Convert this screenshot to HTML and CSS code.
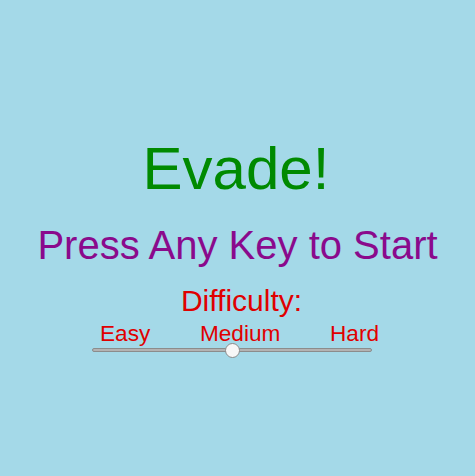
FILE: index.html
```html
<!DOCTYPE html>
<html>
<head>
<meta charset="utf-8">
<link rel="stylesheet" href="styles.css">
</head>
<body>
<div class="screen">
  <h1 class="title">Evade!</h1>
  <div class="prompt">Press Any Key to Start</div>
  <div class="difficulty">Difficulty:</div>
  <div class="levels">
    <span class="level">Easy</span>
    <span class="level">Medium</span>
    <span class="level">Hard</span>
  </div>
  <div class="slider-row">
    <input class="slider" type="range" min="0" max="2" value="1" step="1">
  </div>
</div>
</body>
</html>
```
FILE: styles.css
```css
html, body {
  margin: 0;
  padding: 0;
  height: 100%;
}
body {
  background: #a4d9e8;
  font-family: "Liberation Sans", Arial, sans-serif;
}
.screen {
  display: flex;
  flex-direction: column;
  align-items: center;
  padding-top: 139px;
}
.title {
  margin: 0 3px 0 0;
  font-size: 60px;
  line-height: 60px;
  font-weight: normal;
  color: #008a00;
}
.prompt {
  margin-top: 26px;
  font-size: 40px;
  line-height: 40px;
  color: #8a0a8c;
}
.difficulty {
  margin-top: 21px;
  margin-left: 8px;
  font-size: 30px;
  line-height: 30px;
  color: #e00000;
}
.levels {
  margin-top: 7px;
  width: 279px;
  margin-left: 4px;
  display: flex;
  justify-content: space-between;
  font-size: 22.6px;
  line-height: 22px;
  color: #e00000;
}
.slider-row {
  width: 280px;
  margin-left: -11px;
  height: 16px;
  margin-top: -3px;
  display: flex;
  align-items: center;
}
.slider {
  -webkit-appearance: none;
  appearance: none;
  margin: 0;
  width: 280px;
  height: 16px;
  background: transparent;
}
.slider::-webkit-slider-runnable-track {
  height: 4px;
  background: #b3b3b3;
  border: 1px solid #8c8c8c;
  border-radius: 2px;
  box-sizing: border-box;
}
.slider::-webkit-slider-thumb {
  -webkit-appearance: none;
  width: 15px;
  height: 15px;
  margin-top: -6px;
  border-radius: 50%;
  background: #f7f7f7;
  border: 1px solid #8a8a8a;
  box-sizing: border-box;
}
```
